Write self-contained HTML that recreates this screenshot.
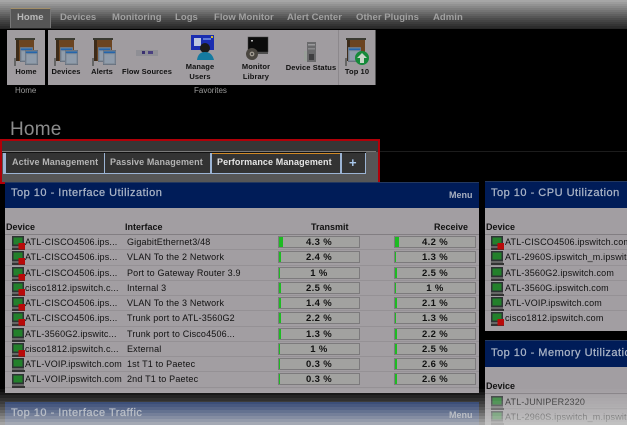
<!DOCTYPE html>
<html><head><meta charset="utf-8"><style>
*{box-sizing:border-box}
html,body{margin:0;padding:0;background:#000}
#p{position:relative;width:627px;height:425px;overflow:hidden;background:#000;font-family:"Liberation Sans",sans-serif}
#p div{position:absolute;white-space:nowrap}
.n{top:12px;font-size:9.5px;font-weight:bold;color:#8e8e8e;letter-spacing:.05px;line-height:12px}
.l{font-size:7.5px;color:#111;text-align:center;line-height:9.5px;letter-spacing:.1px;font-weight:bold}
.s{font-size:8px;color:#9a9a9a;line-height:10px}
.t{top:156px;height:12px;font-size:9px;font-weight:bold;line-height:12px;color:#b4b4b4;letter-spacing:.1px}
.pn{background:#a29ea2}
.hd{background:#001c58}
.ht{font-size:11px;color:#aab4c6;letter-spacing:.5px;line-height:14px;-webkit-text-stroke:.25px #aab4c6}
.ch{font-size:9px;font-weight:bold;color:#111;line-height:11px}
.dv{font-size:9px;color:#111;line-height:11px;letter-spacing:.18px}
.rl{height:1px;background:#959195}
.bar{width:82px;height:12px;background:#a2a2a0;border:1px solid #7c7a7c}
.bar i{position:absolute;left:0;top:0;height:10px;background:#1dbb22;display:block}
.pc{width:80px;text-align:center;font-size:9.5px;font-weight:bold;color:#111;line-height:11px;letter-spacing:.35px}
.tb{left:0;width:627px;height:2px}
.fd{left:0;width:627px;height:3px;background:#c8c8c8}
svg{position:absolute;overflow:visible}
</style></head><body><div id="p">
<svg width="0" height="0" style="position:absolute"><defs>
<symbol id="fold" viewBox="0 0 26 30"><rect x="2" y="0" width="20" height="2" fill="#3a3a32"/><rect x="3" y="2" width="18" height="21" fill="#6b4421"/><rect x="3" y="2" width="3" height="21" fill="#3d2b19"/><rect x="1" y="20" width="2" height="8" fill="#666"/></symbol>
<symbol id="win" viewBox="0 0 16 18"><rect x="0" y="0" width="16" height="18" fill="#7f8a96" stroke="#596270" stroke-width=".8"/><rect x="1" y="1.5" width="14" height="2.2" fill="#2465ab"/><rect x="2" y="5" width="12" height="11" fill="#8f9cab"/></symbol>
<symbol id="dev" viewBox="0 0 14 14"><rect x="0" y="0" width="12" height="10" fill="#2e3234"/><rect x="1.5" y="1.5" width="9" height="7" fill="#23802b"/><rect x="0" y="10" width="12" height="2" fill="#666"/><rect x="0" y="12" width="13" height="2" fill="#333"/></symbol>
</defs></svg>

<!-- top bar (solid strips) -->
<div class="tb" style="top:0;background:#a6a6a6"></div>
<div class="tb" style="top:2px;background:#9c9c9c"></div>
<div class="tb" style="top:4px;background:#929292"></div>
<div class="tb" style="top:6px;background:#888"></div>
<div class="tb" style="top:8px;background:#7e7e7e"></div>
<div class="tb" style="top:10px;background:#747474"></div>
<div class="tb" style="top:12px;background:#6a6a6a"></div>
<div class="tb" style="top:14px;background:#606060"></div>
<div class="tb" style="top:16px;background:#565656"></div>
<div class="tb" style="top:18px;background:#4c4c4c"></div>
<div class="tb" style="top:20px;background:#444"></div>
<div class="tb" style="top:22px;background:#3c3c3c"></div>
<div class="tb" style="top:24px;background:#343434"></div>
<div class="tb" style="top:26px;background:#2c2c2c"></div>
<div class="tb" style="top:28px;height:1px;background:#262626"></div>

<div style="left:10px;top:8px;width:41px;height:20px;background:#565656;border-top:1px solid #a28e68;border-left:1px solid #777;border-right:1px solid #777"></div>
<div class="n" style="left:17px;color:#b8b8b8">Home</div>
<div class="n" style="left:60px;color:#a0a0a0">Devices</div>
<div class="n" style="left:112px;color:#a0a0a0">Monitoring</div>
<div class="n" style="left:175px;color:#a0a0a0">Logs</div>
<div class="n" style="left:214px;color:#a0a0a0">Flow Monitor</div>
<div class="n" style="left:287px;color:#a0a0a0">Alert Center</div>
<div class="n" style="left:356px;color:#a0a0a0">Other Plugins</div>
<div class="n" style="left:433px;color:#a0a0a0">Admin</div>

<!-- toolbar -->
<div style="left:7px;top:30px;width:38px;height:55px;background:#a09ca0"></div>
<div style="left:48px;top:30px;width:328px;height:55px;background:#a09ca0;border-right:1px solid #555"></div>
<div style="left:338px;top:30px;width:1px;height:55px;background:#8c888c"></div>

<svg style="left:13px;top:38px" width="26" height="30"><use href="#fold" width="26" height="30"/><use href="#win" x="7" y="9" width="13" height="15"/><use href="#win" x="12" y="12" width="13" height="15"/></svg>
<svg style="left:53px;top:38px" width="26" height="30"><use href="#fold" width="26" height="30"/><use href="#win" x="7" y="9" width="13" height="15"/><use href="#win" x="12" y="12" width="13" height="15"/></svg>
<svg style="left:91px;top:38px" width="26" height="30"><use href="#fold" width="26" height="30"/><use href="#win" x="7" y="9" width="13" height="15"/><use href="#win" x="12" y="12" width="13" height="15"/></svg>
<svg style="left:135px;top:48px" width="24" height="10"><path d="M1 2H23V8H1Z" fill="#8f8f95"/><rect x="7" y="3" width="3" height="3" fill="#3a3170"/><rect x="13" y="3" width="5" height="3" fill="#4a4080"/></svg>
<svg style="left:190px;top:34px" width="24" height="27"><rect x="1" y="1" width="23" height="15" fill="#1a2db0"/><rect x="4" y="4" width="7" height="8" fill="#bcc6e0"/><rect x="13" y="4" width="8" height="2" fill="#5f7ad8"/><rect x="21" y="2" width="2" height="2" fill="#d8c020"/><circle cx="15" cy="14" r="5" fill="#1a1a1a"/><path d="M7 26Q8 18 15 18T24 26Z" fill="#147aa0"/></svg>
<svg style="left:243px;top:36px" width="26" height="25"><rect x="5" y="1" width="20" height="15" fill="#0b0b0b" stroke="#444" stroke-width=".5"/><rect x="8" y="4" width="2" height="1.5" fill="#bbb"/><rect x="5" y="16" width="20" height="2" fill="#4e4e4e"/><circle cx="9" cy="18" r="6" fill="#4a4640"/><circle cx="9" cy="18" r="2.4" fill="#a09a90"/><circle cx="9" cy="18" r="1" fill="#333"/></svg>
<svg style="left:304px;top:42px" width="15" height="22"><rect x="3" y="0" width="9" height="20" fill="#6a6a6c"/><rect x="0" y="9" width="3" height="10" fill="#9aa09a"/><rect x="4" y="2" width="7" height="1.5" fill="#9a9a9c"/><rect x="4" y="6" width="7" height="1.5" fill="#8a8a8c"/><rect x="5" y="12" width="5" height="6" fill="#3e3e40"/></svg>
<svg style="left:344px;top:38px" width="26" height="30"><use href="#fold" width="26" height="30"/><use href="#win" x="4" y="9" width="13" height="15"/><circle cx="18" cy="20" r="7" fill="#158a3a"/><path d="M18 15L23 20H20V25H16V20H13Z" fill="#c8d6c8"/></svg>

<div class="l" style="left:7px;top:67px;width:38px">Home</div>
<div class="l" style="left:48px;top:67px;width:36px">Devices</div>
<div class="l" style="left:87px;top:67px;width:30px">Alerts</div>
<div class="l" style="left:119px;top:67px;width:56px">Flow Sources</div>
<div class="l" style="left:180px;top:62px;width:40px">Manage<br>Users</div>
<div class="l" style="left:236px;top:62px;width:40px">Monitor<br>Library</div>
<div class="l" style="left:284px;top:63px;width:54px">Device Status</div>
<div class="l" style="left:340px;top:67px;width:34px">Top 10</div>
<div class="s" style="left:15px;top:86px">Home</div>
<div class="s" style="left:194px;top:86px">Favorites</div>

<!-- title -->
<div style="left:10px;top:119px;font-size:19px;line-height:22px;color:#8c8c8c;letter-spacing:.2px">Home</div>
<div style="left:378px;top:151px;width:249px;height:1px;background:#1c1c1c"></div>

<!-- highlight -->
<div style="left:0;top:139px;width:380px;height:45px;border:2px solid #b00008;background:#565656"></div>
<div style="left:2px;top:141px;width:376px;height:11px;background:#363636"></div>
<div style="left:2px;top:151px;width:374px;height:1px;background:#7a7a7a"></div>
<div style="left:2px;top:152px;width:364px;height:1px;background:#111"></div>
<div style="left:3px;top:153px;width:363px;height:21px;background:#9cb4d4"></div>
<div style="left:6px;top:153px;width:98px;height:20px;background:#333"></div>
<div style="left:105px;top:153px;width:105px;height:20px;background:#333"></div>
<div style="left:212px;top:153px;width:128px;height:20px;background:#333;border-top:1px solid #d08a28"></div>
<div style="left:342px;top:153px;width:23px;height:20px;background:#333"></div>
<div class="t" style="left:12px">Active Management</div>
<div class="t" style="left:110px">Passive Management</div>
<div class="t" style="left:217px;color:#e6e6e6">Performance Management</div>
<div style="left:349px;top:156px;font-size:13px;font-weight:bold;line-height:13px;color:#a9c8ec">+</div>

<!-- main panel -->
<div class="pn" style="left:5px;top:182px;width:474px;height:211px"></div>
<div class="hd" style="left:5px;top:182px;width:474px;height:26px;border-top:1px solid #23385f"></div>
<div class="ht" style="left:11px;top:186px">Top 10 - Interface Utilization</div>
<div style="left:449px;top:190px;font-size:9px;font-weight:bold;color:#a7b0c0;line-height:11px">Menu</div>
<div class="ch" style="left:6px;top:222px">Device</div>
<div class="ch" style="left:125px;top:222px">Interface</div>
<div class="ch" style="left:311px;top:222px">Transmit</div>
<div class="ch" style="left:434px;top:222px">Receive</div>
<div class="rl" style="left:5px;top:234px;width:474px;background:#827e82"></div>

<div class="rl" style="left:5px;top:249px;width:474px"></div>
<div class="rl" style="left:5px;top:265px;width:474px"></div>
<div class="rl" style="left:5px;top:280px;width:474px"></div>
<div class="rl" style="left:5px;top:295px;width:474px"></div>
<div class="rl" style="left:5px;top:310px;width:474px"></div>
<div class="rl" style="left:5px;top:326px;width:474px"></div>
<div class="rl" style="left:5px;top:341px;width:474px"></div>
<div class="rl" style="left:5px;top:356px;width:474px"></div>
<div class="rl" style="left:5px;top:371px;width:474px"></div>
<div class="rl" style="left:5px;top:387px;width:474px"></div>

<!-- row icons -->
<svg style="left:12px;top:236px" width="14" height="14"><use href="#dev" width="14" height="14"/><rect x="6.5" y="7" width="6.5" height="6.5" fill="#b80a0a"/></svg>
<svg style="left:12px;top:251px" width="14" height="14"><use href="#dev" width="14" height="14"/><rect x="6.5" y="7" width="6.5" height="6.5" fill="#b80a0a"/></svg>
<svg style="left:12px;top:267px" width="14" height="14"><use href="#dev" width="14" height="14"/><rect x="6.5" y="7" width="6.5" height="6.5" fill="#b80a0a"/></svg>
<svg style="left:12px;top:282px" width="14" height="14"><use href="#dev" width="14" height="14"/><rect x="6.5" y="7" width="6.5" height="6.5" fill="#b80a0a"/></svg>
<svg style="left:12px;top:297px" width="14" height="14"><use href="#dev" width="14" height="14"/><rect x="6.5" y="7" width="6.5" height="6.5" fill="#b80a0a"/></svg>
<svg style="left:12px;top:312px" width="14" height="14"><use href="#dev" width="14" height="14"/><rect x="6.5" y="7" width="6.5" height="6.5" fill="#b80a0a"/></svg>
<svg style="left:12px;top:328px" width="14" height="14"><use href="#dev" width="14" height="14"/></svg>
<svg style="left:12px;top:343px" width="14" height="14"><use href="#dev" width="14" height="14"/><rect x="6.5" y="7" width="6.5" height="6.5" fill="#b80a0a"/></svg>
<svg style="left:12px;top:358px" width="14" height="14"><use href="#dev" width="14" height="14"/></svg>
<svg style="left:12px;top:374px" width="14" height="14"><use href="#dev" width="14" height="14"/></svg>

<div class="dv" style="left:25px;top:237px">ATL-CISCO4506.ips...</div><div class="dv" style="left:127px;top:237px">GigabitEthernet3/48</div>
<div class="dv" style="left:25px;top:252px">ATL-CISCO4506.ips...</div><div class="dv" style="left:127px;top:252px">VLAN To the 2 Network</div>
<div class="dv" style="left:25px;top:268px">ATL-CISCO4506.ips...</div><div class="dv" style="left:127px;top:268px">Port to Gateway Router 3.9</div>
<div class="dv" style="left:25px;top:283px">cisco1812.ipswitch.c...</div><div class="dv" style="left:127px;top:283px">Internal 3</div>
<div class="dv" style="left:25px;top:298px">ATL-CISCO4506.ips...</div><div class="dv" style="left:127px;top:298px">VLAN To the 3 Network</div>
<div class="dv" style="left:25px;top:313px">ATL-CISCO4506.ips...</div><div class="dv" style="left:127px;top:313px">Trunk port to ATL-3560G2</div>
<div class="dv" style="left:25px;top:329px">ATL-3560G2.ipswitc...</div><div class="dv" style="left:127px;top:329px">Trunk port to Cisco4506...</div>
<div class="dv" style="left:25px;top:344px">cisco1812.ipswitch.c...</div><div class="dv" style="left:127px;top:344px">External</div>
<div class="dv" style="left:25px;top:359px">ATL-VOIP.ipswitch.com</div><div class="dv" style="left:127px;top:359px">1st T1 to Paetec</div>
<div class="dv" style="left:25px;top:374px">ATL-VOIP.ipswitch.com</div><div class="dv" style="left:127px;top:374px">2nd T1 to Paetec</div>

<!-- transmit bars -->
<div class="bar" style="left:278px;top:236px"><i style="width:4px"></i></div>
<div class="bar" style="left:278px;top:251px"><i style="width:2px"></i></div>
<div class="bar" style="left:278px;top:267px"><i style="width:1px"></i></div>
<div class="bar" style="left:278px;top:282px"><i style="width:2px"></i></div>
<div class="bar" style="left:278px;top:297px"><i style="width:1.5px"></i></div>
<div class="bar" style="left:278px;top:312px"><i style="width:2px"></i></div>
<div class="bar" style="left:278px;top:328px"><i style="width:1.5px"></i></div>
<div class="bar" style="left:278px;top:343px"><i style="width:1px"></i></div>
<div class="bar" style="left:278px;top:358px"><i style="width:1px"></i></div>
<div class="bar" style="left:278px;top:373px"><i style="width:1px"></i></div>
<!-- receive bars -->
<div class="bar" style="left:394px;top:236px"><i style="width:4px"></i></div>
<div class="bar" style="left:394px;top:251px"><i style="width:1px"></i></div>
<div class="bar" style="left:394px;top:267px"><i style="width:2px"></i></div>
<div class="bar" style="left:394px;top:282px"><i style="width:1px"></i></div>
<div class="bar" style="left:394px;top:297px"><i style="width:2px"></i></div>
<div class="bar" style="left:394px;top:312px"><i style="width:1px"></i></div>
<div class="bar" style="left:394px;top:328px"><i style="width:2px"></i></div>
<div class="bar" style="left:394px;top:343px"><i style="width:2px"></i></div>
<div class="bar" style="left:394px;top:358px"><i style="width:2px"></i></div>
<div class="bar" style="left:394px;top:373px"><i style="width:2px"></i></div>

<div class="pc" style="left:279px;top:237px">4.3 %</div><div class="pc" style="left:395px;top:237px">4.2 %</div>
<div class="pc" style="left:279px;top:252px">2.4 %</div><div class="pc" style="left:395px;top:252px">1.3 %</div>
<div class="pc" style="left:279px;top:268px">1 %</div><div class="pc" style="left:395px;top:268px">2.5 %</div>
<div class="pc" style="left:279px;top:283px">2.5 %</div><div class="pc" style="left:395px;top:283px">1 %</div>
<div class="pc" style="left:279px;top:298px">1.4 %</div><div class="pc" style="left:395px;top:298px">2.1 %</div>
<div class="pc" style="left:279px;top:313px">2.2 %</div><div class="pc" style="left:395px;top:313px">1.3 %</div>
<div class="pc" style="left:279px;top:329px">1.3 %</div><div class="pc" style="left:395px;top:329px">2.2 %</div>
<div class="pc" style="left:279px;top:344px">1 %</div><div class="pc" style="left:395px;top:344px">2.5 %</div>
<div class="pc" style="left:279px;top:359px">0.3 %</div><div class="pc" style="left:395px;top:359px">2.6 %</div>
<div class="pc" style="left:279px;top:374px">0.3 %</div><div class="pc" style="left:395px;top:374px">2.6 %</div>

<!-- bottom left panel -->
<div class="pn" style="left:5px;top:402px;width:474px;height:30px"></div>
<div class="hd" style="left:5px;top:402px;width:474px;height:26px"></div>
<div class="ht" style="left:11px;top:406px">Top 10 - Interface Traffic</div>
<div style="left:449px;top:410px;font-size:9px;font-weight:bold;color:#a7b0c0;line-height:11px">Menu</div>

<!-- right panel 1 -->
<div class="pn" style="left:485px;top:181px;width:150px;height:150px"></div>
<div class="hd" style="left:485px;top:181px;width:150px;height:27px;border-top:1px solid #23385f"></div>
<div class="ht" style="left:491px;top:186px">Top 10 - CPU Utilization</div>
<div class="ch" style="left:486px;top:222px">Device</div>
<div class="rl" style="left:485px;top:234px;width:142px;background:#827e82"></div>
<div class="rl" style="left:485px;top:249px;width:142px"></div>
<div class="rl" style="left:485px;top:265px;width:142px"></div>
<div class="rl" style="left:485px;top:280px;width:142px"></div>
<div class="rl" style="left:485px;top:295px;width:142px"></div>
<div class="rl" style="left:485px;top:310px;width:142px"></div>
<svg style="left:491px;top:236px" width="14" height="14"><use href="#dev" width="14" height="14"/><rect x="6.5" y="7" width="6.5" height="6.5" fill="#b80a0a"/></svg>
<svg style="left:491px;top:251px" width="14" height="14"><use href="#dev" width="14" height="14"/></svg>
<svg style="left:491px;top:267px" width="14" height="14"><use href="#dev" width="14" height="14"/></svg>
<svg style="left:491px;top:282px" width="14" height="14"><use href="#dev" width="14" height="14"/></svg>
<svg style="left:491px;top:297px" width="14" height="14"><use href="#dev" width="14" height="14"/></svg>
<svg style="left:491px;top:312px" width="14" height="14"><use href="#dev" width="14" height="14"/><rect x="6.5" y="7" width="6.5" height="6.5" fill="#b80a0a"/></svg>
<div class="dv" style="left:505px;top:237px">ATL-CISCO4506.ipswitch.com</div>
<div class="dv" style="left:505px;top:252px">ATL-2960S.ipswitch_m.ipswitch.com</div>
<div class="dv" style="left:505px;top:268px">ATL-3560G2.ipswitch.com</div>
<div class="dv" style="left:505px;top:283px">ATL-3560G.ipswitch.com</div>
<div class="dv" style="left:505px;top:298px">ATL-VOIP.ipswitch.com</div>
<div class="dv" style="left:505px;top:313px">cisco1812.ipswitch.com</div>

<!-- right panel 2 -->
<div class="pn" style="left:485px;top:340px;width:150px;height:90px"></div>
<div class="hd" style="left:485px;top:340px;width:150px;height:27px;border-top:1px solid #23385f"></div>
<div class="ht" style="left:491px;top:346px">Top 10 - Memory Utilization</div>
<div class="ch" style="left:486px;top:381px">Device</div>
<div class="rl" style="left:485px;top:393px;width:142px;background:#827e82"></div>
<div class="rl" style="left:485px;top:408px;width:142px"></div>
<svg style="left:491px;top:396px" width="14" height="14"><use href="#dev" width="14" height="14"/></svg>
<svg style="left:491px;top:411px" width="14" height="14"><use href="#dev" width="14" height="14"/></svg>
<div class="dv" style="left:505px;top:397px">ATL-JUNIPER2320</div>
<div class="dv" style="left:505px;top:412px">ATL-2960S.ipswitch_m.ipswitch.com</div>

<!-- bottom fade (solid strips with opacity) -->
<div class="fd" style="top:389px;opacity:.06"></div>
<div class="fd" style="top:392px;opacity:.12"></div>
<div class="fd" style="top:395px;opacity:.18"></div>
<div class="fd" style="top:398px;opacity:.24"></div>
<div class="fd" style="top:401px;opacity:.3"></div>
<div class="fd" style="top:404px;opacity:.36"></div>
<div class="fd" style="top:407px;opacity:.43"></div>
<div class="fd" style="top:410px;opacity:.5"></div>
<div class="fd" style="top:413px;opacity:.58"></div>
<div class="fd" style="top:416px;opacity:.66"></div>
<div class="fd" style="top:419px;opacity:.74"></div>
<div class="fd" style="top:422px;opacity:.82"></div>
</div></body></html>
